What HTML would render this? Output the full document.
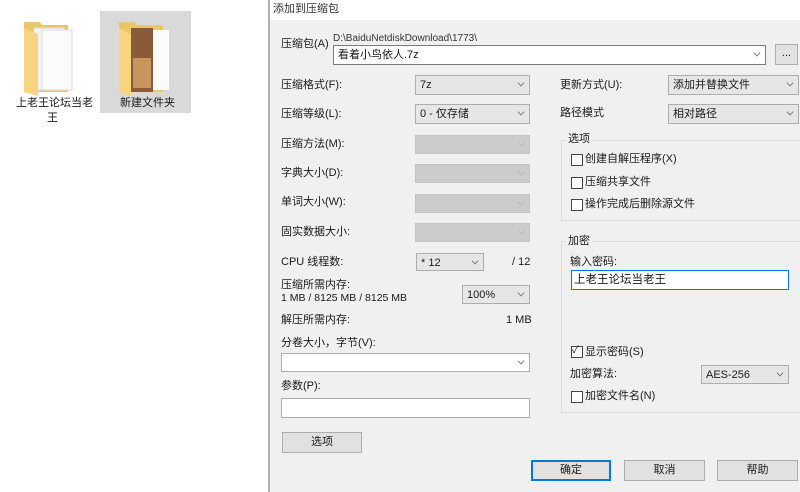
<!DOCTYPE html>
<html><head><meta charset="utf-8"><style>
*{margin:0;padding:0;box-sizing:border-box}
body{width:800px;height:492px;overflow:hidden;background:#fff;position:relative;font-family:"Liberation Sans","Noto Sans CJK SC",sans-serif;font-size:11px;color:#1a1a1a}
.a{position:absolute;white-space:nowrap;line-height:13px}
.cb{position:absolute;background:#e6e6e6;border:1px solid #adadad}
.cb.w{background:#fff;border-color:#7a7a7a}
.cb.d{background:#cccccc;border-color:#c4c4c4}
.cb span{position:absolute;left:4px;top:3px;line-height:13px}
.cb i{position:absolute;right:5px;top:4px;width:6px;height:6px;border-right:1px solid #666;border-bottom:1px solid #666;transform:rotate(45deg) scale(.8)}
.cb.d i{border-color:#b5b5b5}
.grp{position:absolute;border:1px solid #dcdcdc;background:#f0f0f0}
.chk{position:absolute;width:12px;height:12px;border:1px solid #444;background:#fff}
.btn{position:absolute;background:#e1e1e1;border:1px solid #adadad;text-align:center;line-height:18px}
</style></head><body>
<!-- desktop -->
<div style="position:absolute;left:100px;top:11px;width:91px;height:102px;background:#d9d9d9"></div>
<svg style="position:absolute;left:20px;top:18px" width="60" height="78" viewBox="0 0 60 78">
<path d="M4 4 L20 4 L22 7 L48 7 L48 74 L4 74 Z" fill="#e8c766"/>
<rect x="14" y="10" width="30" height="62" fill="#f4f4f4" stroke="#ddd"/>
<rect x="22" y="12" width="30" height="60" fill="#fbfbfb" stroke="#ddd"/>
<path d="M4 10 L18 16 L18 78 L4 74 Z" fill="#f6d57e"/>
</svg>
<svg style="position:absolute;left:115px;top:18px" width="60" height="78" viewBox="0 0 60 78">
<path d="M4 4 L20 4 L22 7 L48 7 L48 74 L4 74 Z" fill="#e8c766"/>
<rect x="36" y="12" width="18" height="60" fill="#fbfbfb"/>
<rect x="16" y="10" width="22" height="64" fill="#8a5a3a"/>
<rect x="18" y="40" width="18" height="30" fill="#c9955f"/>
<path d="M4 10 L16 16 L16 78 L4 74 Z" fill="#f6d57e"/>
</svg>
<div class="a" style="left:16px;top:97px;font-size:11px">上老王论坛当老</div>
<div class="a" style="left:47px;top:112px">王</div>
<div class="a" style="left:120px;top:97px">新建文件夹</div>
<!-- dialog -->
<div style="position:absolute;left:268px;top:0;width:532px;height:492px;background:#f0f0f0;border-left:2px solid #b0b0b0"></div>
<div style="position:absolute;left:270px;top:0;width:530px;height:20px;background:#fff"></div>
<div class="a" style="left:273px;top:3px;color:#333">添加到压缩包</div>
<div class="a" style="left:281px;top:38px">压缩包(A)</div>
<div class="a" style="left:333px;top:32px;font-size:10px;color:#333">D:\BaiduNetdiskDownload\1773\</div>
<div class="cb w" style="left:333px;top:45px;width:433px;height:20px"><span>看着小鸟依人.7z</span><i></i></div>
<div class="btn" style="left:775px;top:44px;width:23px;height:21px;line-height:16px">...</div>

<div class="a" style="left:281px;top:79px">压缩格式(F):</div>
<div class="cb" style="left:415px;top:75px;width:115px;height:20px"><span>7z</span><i></i></div>
<div class="a" style="left:560px;top:79px">更新方式(U):</div>
<div class="cb" style="left:668px;top:75px;width:131px;height:20px"><span>添加并替换文件</span><i></i></div>
<div class="a" style="left:281px;top:108px">压缩等级(L):</div>
<div class="cb" style="left:415px;top:104px;width:115px;height:20px"><span>0 - 仅存储</span><i></i></div>
<div class="a" style="left:560px;top:107px">路径模式</div>
<div class="cb" style="left:668px;top:104px;width:131px;height:20px"><span>相对路径</span><i></i></div>

<div class="a" style="left:281px;top:138px">压缩方法(M):</div>
<div class="cb d" style="left:415px;top:135px;width:115px;height:19px"><i></i></div>
<div class="a" style="left:281px;top:167px">字典大小(D):</div>
<div class="cb d" style="left:415px;top:164px;width:115px;height:19px"><i></i></div>
<div class="a" style="left:281px;top:196px">单词大小(W):</div>
<div class="cb d" style="left:415px;top:194px;width:115px;height:19px"><i></i></div>
<div class="a" style="left:281px;top:226px">固实数据大小:</div>
<div class="cb d" style="left:415px;top:223px;width:115px;height:19px"><i></i></div>
<div class="a" style="left:281px;top:256px">CPU 线程数:</div>
<div class="cb" style="left:416px;top:253px;width:68px;height:18px"><span>* 12</span><i></i></div>
<div class="a" style="left:512px;top:256px">/ 12</div>
<div class="a" style="left:281px;top:279px">压缩所需内存:</div>
<div class="a" style="left:281px;top:292px;font-size:10.5px">1 MB / 8125 MB / 8125 MB</div>
<div class="cb" style="left:462px;top:285px;width:68px;height:19px"><span>100%</span><i></i></div>
<div class="a" style="left:281px;top:314px">解压所需内存:</div>
<div class="a" style="left:506px;top:314px">1 MB</div>
<div class="a" style="left:281px;top:337px">分卷大小，字节(V):</div>
<div class="cb w" style="left:281px;top:353px;width:249px;height:19px;border-color:#adadad"><i></i></div>
<div class="a" style="left:281px;top:380px">参数(P):</div>
<div style="position:absolute;left:281px;top:398px;width:249px;height:20px;background:#fff;border:1px solid #adadad"></div>
<div class="btn" style="left:282px;top:432px;width:80px;height:21px">选项</div>

<div class="grp" style="left:561px;top:140px;width:240px;height:81px"></div>
<div class="a" style="left:566px;top:133px;background:#f0f0f0;padding:0 2px">选项</div>
<div class="chk" style="left:571px;top:154px"></div><div class="a" style="left:585px;top:153px">创建自解压程序(X)</div>
<div class="chk" style="left:571px;top:177px"></div><div class="a" style="left:585px;top:176px">压缩共享文件</div>
<div class="chk" style="left:571px;top:199px"></div><div class="a" style="left:585px;top:198px">操作完成后删除源文件</div>

<div class="grp" style="left:561px;top:241px;width:240px;height:172px"></div>
<div class="a" style="left:566px;top:235px;background:#f0f0f0;padding:0 2px">加密</div>
<div class="a" style="left:570px;top:256px">输入密码:</div>
<div style="position:absolute;left:571px;top:270px;width:218px;height:20px;background:#fff;border:1px solid #0078d7"></div>
<div class="a" style="left:574px;top:274px;font-size:11.5px">上老王论坛当老王</div>
<div class="chk" style="left:571px;top:346px"></div><div class="a" style="left:572px;top:344px;font-size:10px">✓</div>
<div class="a" style="left:585px;top:346px">显示密码(S)</div>
<div class="a" style="left:570px;top:368px">加密算法:</div>
<div class="cb" style="left:701px;top:365px;width:88px;height:19px"><span>AES-256</span><i></i></div>
<div class="chk" style="left:571px;top:391px"></div><div class="a" style="left:585px;top:390px">加密文件名(N)</div>

<div class="btn" style="left:531px;top:460px;width:80px;height:21px;border:2px solid #0078d7;line-height:17px">确定</div>
<div class="btn" style="left:624px;top:460px;width:81px;height:21px">取消</div>
<div class="btn" style="left:717px;top:460px;width:81px;height:21px">帮助</div>
</body></html>
